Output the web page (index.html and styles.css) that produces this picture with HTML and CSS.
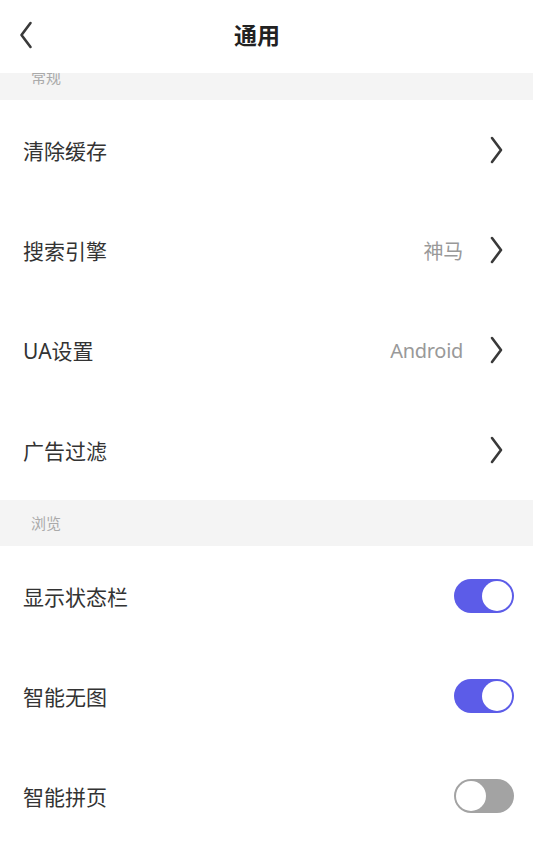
FILE: index.html
```html
<!DOCTYPE html>
<html>

<head>
	<meta charset="utf-8">
	<title>通用</title>
	<link rel="stylesheet" href="styles.css">
</head>

<body>
	<div class="page">
		<div class="topbar">
			<svg class="back" width="14" height="28" viewBox="0 0 14 28">
				<path d="M11.5 2 L2.5 14 L11.5 26" fill="none" stroke="#3a3a3a" stroke-width="2.6" stroke-linecap="round" stroke-linejoin="round" />
			</svg>
			<h1>通用</h1>
		</div>
		<div class="list">
			<div class="group">常规</div>
			<div class="row">
				<span class="label">清除缓存</span>
				<span class="right"><svg class="arrow" width="13" height="28" viewBox="0 0 13 28"><path d="M2 2 L11 14 L2 26" /></svg></span>
			</div>
			<div class="row">
				<span class="label">搜索引擎</span>
				<span class="right"><span class="value">神马</span><svg class="arrow" width="13" height="28" viewBox="0 0 13 28"><path d="M2 2 L11 14 L2 26" /></svg></span>
			</div>
			<div class="row">
				<span class="label">UA设置</span>
				<span class="right"><span class="value">Android</span><svg class="arrow" width="13" height="28" viewBox="0 0 13 28"><path d="M2 2 L11 14 L2 26" /></svg></span>
			</div>
			<div class="row">
				<span class="label">广告过滤</span>
				<span class="right"><svg class="arrow" width="13" height="28" viewBox="0 0 13 28"><path d="M2 2 L11 14 L2 26" /></svg></span>
			</div>
			<div class="group">浏览</div>
			<div class="row sw-row">
				<span class="label">显示状态栏</span>
				<span class="switch on"></span>
			</div>
			<div class="row sw-row">
				<span class="label">智能无图</span>
				<span class="switch on"></span>
			</div>
			<div class="row sw-row">
				<span class="label">智能拼页</span>
				<span class="switch"></span>
			</div>
		</div>
	</div>
</body>

</html>
```

FILE: styles.css
```css
body {
	margin: 0;
	background: #fff;
	font-family: "Noto Sans", "Noto Sans CJK SC", sans-serif;
	color: #333;
}

.page {
	width: 533px;
	height: 848px;
	overflow: hidden;
}

.topbar {
	position: relative;
	z-index: 2;
	height: 73px;
	background: #fff;
	display: flex;
	align-items: center;
	justify-content: center;
}

.topbar h1 {
	margin: 0;
	font-size: 23px;
	font-weight: bold;
	color: #222;
	padding: 0 19px 6px 0;
}

.back {
	position: absolute;
	left: 19px;
	top: 21px;
}

/* the list is scrolled a little under the bar */
.list {
	margin-top: -19px;
}

.group {
	height: 46px;
	line-height: 46px;
	background: #f4f4f4;
	padding-left: 31px;
	font-size: 15px;
	color: #aaa;
}

.row {
	height: 100px;
	display: flex;
	align-items: center;
	justify-content: space-between;
	padding: 0 30px 0 23px;
	font-size: 21px;
	color: #333;
}

.sw-row {
	padding-right: 19px;
}

.right {
	display: flex;
	align-items: center;
}

.value {
	font-size: 20px;
	color: #999;
	margin-right: 27px;
	letter-spacing: -0.3px;
}

.arrow {
	display: block;
}

.arrow path {
	fill: none;
	stroke: #3a3a3a;
	stroke-width: 2.6;
	stroke-linecap: round;
	stroke-linejoin: round;
}

.switch {
	position: relative;
	width: 60px;
	height: 34px;
	border-radius: 17px;
	background: #a3a3a3;
	box-sizing: border-box;
}

.switch::after {
	content: "";
	position: absolute;
	top: 2px;
	left: 2px;
	width: 30px;
	height: 30px;
	border-radius: 50%;
	background: #fff;
	box-sizing: border-box;
}

.switch.on {
	background: #5c5ce8;
}

.switch.on::after {
	left: 28px;
}
```
